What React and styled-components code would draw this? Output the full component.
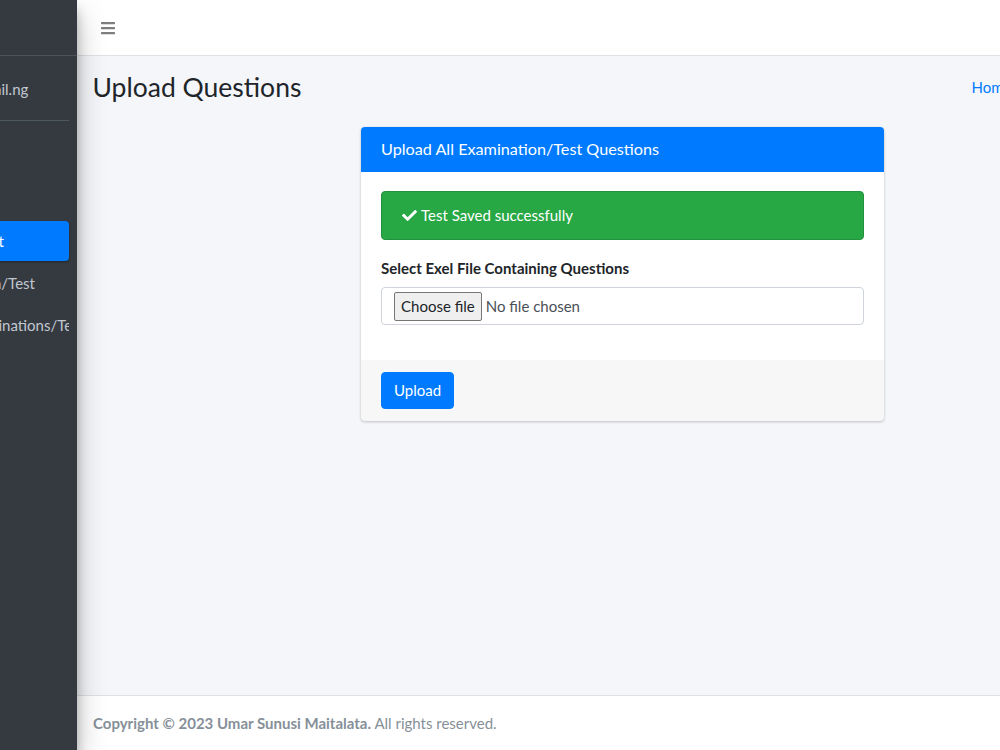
import React from 'react';
import styled, { createGlobalStyle } from 'styled-components';
import { FaBars, FaCheck, FaTachometerAlt, FaUsers, FaBook, FaPlusCircle, FaList, FaUserCircle } from 'react-icons/fa';

const GlobalStyle = createGlobalStyle`
  html, body {
    margin: 0;
    padding: 0;
    overflow: hidden;
  }
  body {
    font-family: Lato, "Noto Sans", sans-serif;
    font-size: 15px;
    line-height: 1.5;
    color: #212529;
    background: #f4f6f9;
  }
  * {
    box-sizing: border-box;
  }
`;

const Wrapper = styled.div`
  display: flex;
  min-height: 100vh;
`;

const Sidebar = styled.aside`
  flex: 0 0 250px;
  margin-left: -173px;
  background: #343a40;
  position: relative;
  z-index: 2;
  box-shadow: 0 14px 28px rgba(0, 0, 0, 0.25), 0 10px 10px rgba(0, 0, 0, 0.22);
  overflow: hidden;
`;

const Brand = styled.div`
  height: 56px;
  display: flex;
  align-items: center;
  gap: 10px;
  padding: 0 16px;
  border-bottom: 1px solid #4b545c;
  color: rgba(255, 255, 255, 0.8);
  font-size: 20px;
  font-weight: 300;
`;

const SidebarInner = styled.div`
  padding: 0 8px;
`;

const UserPanel = styled.div`
  display: flex;
  align-items: center;
  margin: 16px 0;
  padding: 0 0 14px 12.8px;
  border-bottom: 1px solid #4f5962;
  color: #c2c7d0;

  svg {
    flex: 0 0 34px;
    color: #adb5bd;
  }
`;

const UserName = styled.span`
  padding-left: 15px;
  white-space: nowrap;
`;

const Nav = styled.ul`
  list-style: none;
  margin: 0;
  padding: 0;
`;

const NavLink = styled.li`
  display: flex;
  align-items: center;
  height: 40px;
  margin-bottom: 2px;
  padding: 0 16px;
  border-radius: 4px;
  white-space: nowrap;
  overflow: hidden;
  color: ${(p) => (p.$active ? '#fff' : '#c2c7d0')};
  background: ${(p) => (p.$active ? '#007bff' : 'transparent')};
  box-shadow: ${(p) => (p.$active ? '0 1px 3px rgba(0,0,0,.12), 0 1px 2px rgba(0,0,0,.24)' : 'none')};

  svg {
    flex: 0 0 25.6px;
    margin-right: 9px;
    font-size: 15px;
  }
`;

const Main = styled.div`
  flex: 0 0 1091px;
  display: flex;
  flex-direction: column;
  min-height: 100vh;
`;

const Navbar = styled.nav`
  height: 56px;
  display: flex;
  align-items: center;
  padding: 0 8px;
  background: #fff;
  border-bottom: 1px solid #dee2e6;
`;

const MenuToggle = styled.button`
  display: flex;
  align-items: center;
  padding: 8px 15px;
  border: none;
  background: none;
  color: rgba(0, 0, 0, 0.5);
  font-size: 16px;
`;

const Content = styled.main`
  flex: 1;
  padding: 0 8px;
`;

const ContentHeader = styled.div`
  display: flex;
  justify-content: space-between;
  align-items: center;
  padding: 14px 7.5px 15px;
`;

const PageTitle = styled.h1`
  margin: 0;
  font-size: 26.5px;
  font-weight: 400;
  line-height: 34px;
  color: #212529;
`;

const Breadcrumb = styled.ol`
  display: flex;
  list-style: none;
  margin: 0;
  padding: 0;
  color: #6c757d;

  li + li::before {
    content: '/';
    padding: 0 8px;
    color: #6c757d;
  }

  a {
    color: #007bff;
    text-decoration: none;
  }
`;

const Card = styled.section`
  width: 523px;
  margin: 8px auto 0;
  background: #fff;
  border-radius: 4px;
  overflow: hidden;
  box-shadow: 0 0 1px rgba(0, 0, 0, 0.125), 0 1px 3px rgba(0, 0, 0, 0.2);
`;

const CardHeader = styled.header`
  height: 45px;
  display: flex;
  align-items: center;
  padding: 0 20px;
  background: #007bff;
  color: #fff;
  font-size: 16.2px;
`;

const CardBody = styled.div`
  padding: 19px 20px 19px;
`;

const Alert = styled.div`
  display: flex;
  align-items: center;
  gap: 4px;
  height: 49px;
  padding: 0 20px;
  margin-bottom: 16px;
  border: 1px solid #23923d;
  border-radius: 4px;
  background: #28a745;
  color: #fff;
`;

const Label = styled.label`
  display: block;
  margin-bottom: 7px;
  font-weight: 700;
  font-size: 15px;
  line-height: 24px;
`;

const FileField = styled.label`
  display: flex;
  align-items: center;
  gap: 4px;
  height: 38px;
  margin-bottom: 16px;
  padding: 0 12px;
  border: 1px solid #ced4da;
  border-radius: 4px;
  background: #fff;
  color: #495057;

  input {
    display: none;
  }
`;

const FileButton = styled.span`
  display: flex;
  align-items: center;
  height: 29px;
  padding: 0 6px;
  border: 1px solid #767676;
  border-radius: 2px;
  background: #efefef;
  color: #212529;
`;

const CardFooter = styled.footer`
  padding: 12px 20px;
  background: rgba(0, 0, 0, 0.03);
`;

const Button = styled.button`
  height: 37px;
  padding: 0 12px;
  border: 1px solid #007bff;
  border-radius: 4px;
  background: #007bff;
  color: #fff;
  font: inherit;
`;

const PageFooter = styled.footer`
  padding: 16px;
  background: #fff;
  border-top: 1px solid #dee2e6;
  color: #869099;

  strong {
    font-weight: 700;
  }
`;

const navItems = [
  { icon: <FaTachometerAlt />, label: 'Dashboard' },
  { icon: <FaUsers />, label: 'Students' },
  { icon: <FaBook />, label: 'Course Enrolment', active: true },
  { icon: <FaPlusCircle />, label: 'New Examination/Test' },
  { icon: <FaList />, label: 'Manage All Examinations/Tests' },
];

export default function App() {
  return (
    <>
      <GlobalStyle />
      <Wrapper>
        <Sidebar>
          <Brand>CBT</Brand>
          <SidebarInner>
            <UserPanel>
              <FaUserCircle size={34} />
              <UserName>cbt.admin@gmail.ng</UserName>
            </UserPanel>
            <Nav>
              {navItems.map((item) => (
                <NavLink key={item.label} $active={item.active}>
                  {item.icon}
                  {item.label}
                </NavLink>
              ))}
            </Nav>
          </SidebarInner>
        </Sidebar>

        <Main>
          <Navbar>
            <MenuToggle aria-label="Toggle sidebar">
              <FaBars />
            </MenuToggle>
          </Navbar>

          <Content>
            <ContentHeader>
              <PageTitle>Upload Questions</PageTitle>
              <Breadcrumb>
                <li><a href="#">Home</a></li>
                <li>Upload Questions</li>
              </Breadcrumb>
            </ContentHeader>

            <Card>
              <CardHeader>Upload All Examination/Test Questions</CardHeader>
              <CardBody>
                <Alert>
                  <FaCheck />
                  Test Saved successfully
                </Alert>
                <Label htmlFor="questions">Select Exel File Containing Questions</Label>
                <FileField>
                  <input id="questions" type="file" />
                  <FileButton>Choose file</FileButton>
                  <span>No file chosen</span>
                </FileField>
              </CardBody>
              <CardFooter>
                <Button type="button">Upload</Button>
              </CardFooter>
            </Card>
          </Content>

          <PageFooter>
            <strong>Copyright © 2023 Umar Sunusi Maitalata.</strong> All rights reserved.
          </PageFooter>
        </Main>
      </Wrapper>
    </>
  );
}
